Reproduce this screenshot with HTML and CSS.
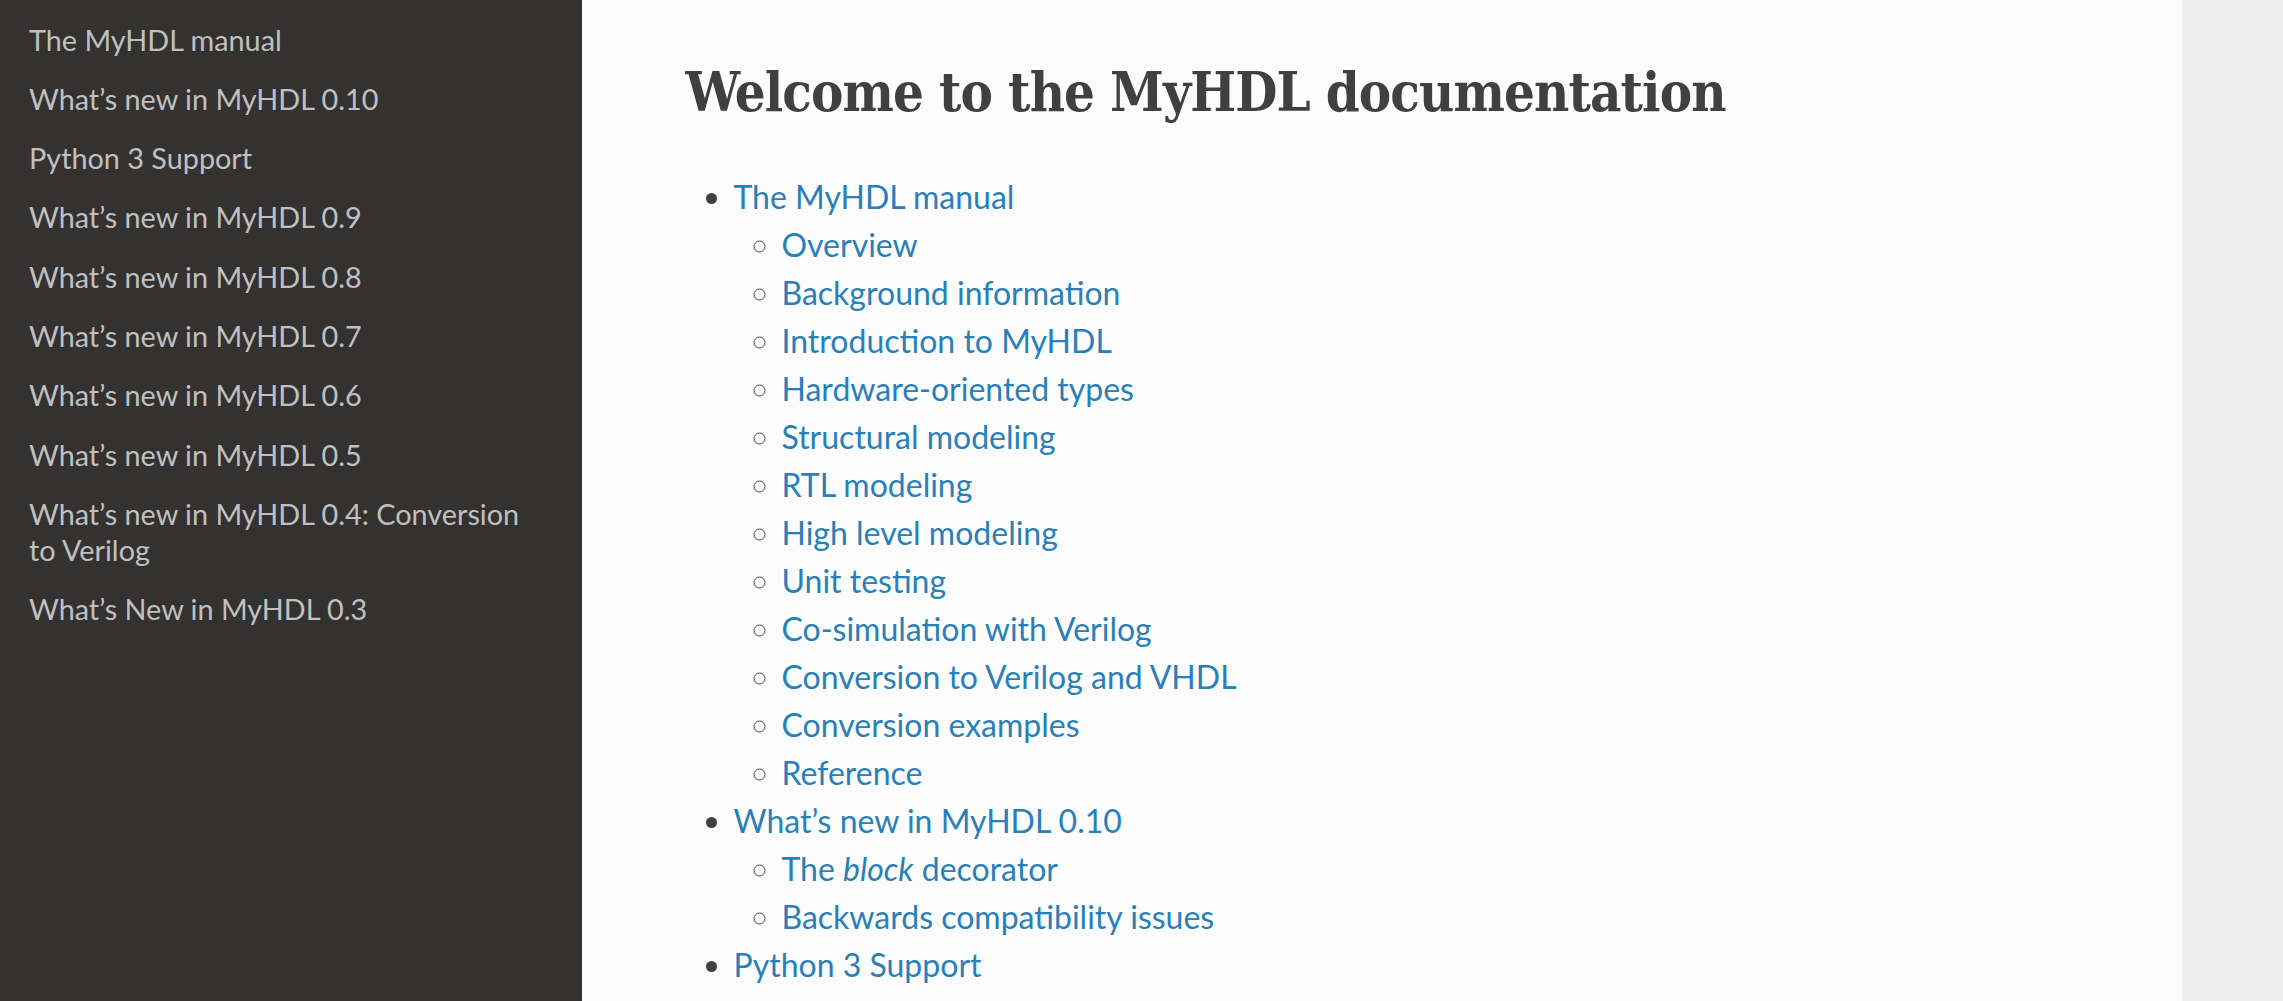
FILE: index.html
```html
<!DOCTYPE html>
<html lang="en">
<head>
<meta charset="utf-8">
<title>Welcome to the MyHDL documentation</title>
<link rel="stylesheet" href="styles.css">
</head>
<body>
<div class="page">
  <nav class="sidebar">
    <ul class="menu">
      <li><a href="#">The MyHDL manual</a></li>
      <li><a href="#">What’s new in MyHDL 0.10</a></li>
      <li><a href="#">Python 3 Support</a></li>
      <li><a href="#">What’s new in MyHDL 0.9</a></li>
      <li><a href="#">What’s new in MyHDL 0.8</a></li>
      <li><a href="#">What’s new in MyHDL 0.7</a></li>
      <li><a href="#">What’s new in MyHDL 0.6</a></li>
      <li><a href="#">What’s new in MyHDL 0.5</a></li>
      <li><a href="#">What’s new in MyHDL 0.4: Conversion to Verilog</a></li>
      <li><a href="#">What’s New in MyHDL 0.3</a></li>
    </ul>
  </nav>
  <main class="content">
    <h1 class="title">Welcome to the MyHDL documentation</h1>
    <ul class="toc">
      <li><a href="#">The MyHDL manual</a>
        <ul class="toc-sub">
          <li><a href="#">Overview</a></li>
          <li><a href="#">Background information</a></li>
          <li><a href="#">Introduction to MyHDL</a></li>
          <li><a href="#">Hardware-oriented types</a></li>
          <li><a href="#">Structural modeling</a></li>
          <li><a href="#">RTL modeling</a></li>
          <li><a href="#">High level modeling</a></li>
          <li><a href="#">Unit testing</a></li>
          <li><a href="#">Co-simulation with Verilog</a></li>
          <li><a href="#">Conversion to Verilog and VHDL</a></li>
          <li><a href="#">Conversion examples</a></li>
          <li><a href="#">Reference</a></li>
        </ul>
      </li>
      <li><a href="#">What’s new in MyHDL 0.10</a>
        <ul class="toc-sub">
          <li><a href="#">The <em>block</em> decorator</a></li>
          <li><a href="#">Backwards compatibility issues</a></li>
        </ul>
      </li>
      <li><a href="#">Python 3 Support</a></li>
    </ul>
  </main>
  <div class="gutter"></div>
</div>
</body>
</html>
```

FILE: styles.css
```css
html, body {
  margin: 0;
  padding: 0;
  height: 100%;
  overflow: hidden;
}

body {
  background: #efefef;
  font-family: Lato, "Noto Sans", sans-serif;
  color: #404040;
}

.page {
  display: flex;
  height: 100%;
}

.sidebar {
  flex: 0 0 582px;
  background: #343131;
  padding-top: 10px;
}

.menu {
  list-style: none;
  margin: 0;
  padding: 0;
}

.menu a {
  display: block;
  padding: 11.65px 46px 11.65px 29px;
  font-size: 28.8px;
  line-height: 36px;
  color: #c0c0c0;
  text-decoration: none;
}

.content {
  flex: 0 0 1600px;
  box-sizing: border-box;
  background: #fcfcfc;
  padding: 51.8px 103.5px;
}

.gutter {
  flex: 1 1 auto;
}

.title {
  margin: 0 0 41px;
  font-family: "DejaVu Serif Condensed", "DejaVu Serif", serif;
  font-stretch: condensed;
  font-weight: 700;
  font-size: 54px;
  line-height: 80px;
  letter-spacing: -0.9px;
  color: #404040;
}

.toc, .toc-sub {
  margin: 0 0 0 48px;
  padding: 0;
  font-size: 32px;
  line-height: 48px;
}

.toc {
  list-style: disc;
}

.toc-sub {
  list-style: circle;
}

.toc a {
  color: #2980b9;
  text-decoration: none;
}
```
